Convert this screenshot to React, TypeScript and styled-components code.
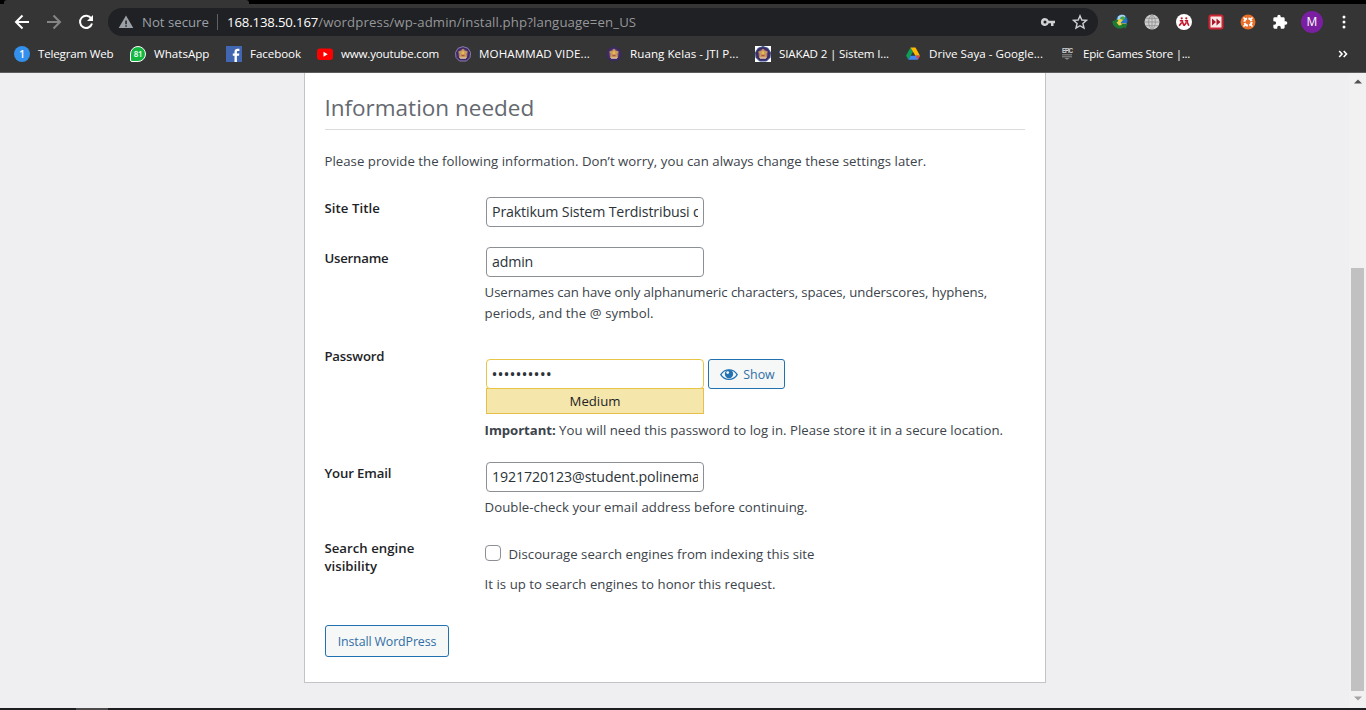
import React from "react";
import styled, { createGlobalStyle } from "styled-components";

const GlobalStyle = createGlobalStyle`
  *, *::before, *::after { box-sizing: border-box; }
  body {
    margin: 0;
    overflow: hidden;
    font-family: "Open Sans", "Noto Sans", sans-serif;
    background: #f0f0f1;
  }
`;

const Window = styled.div`
  display: flex;
  flex-direction: column;
  width: 1366px;
  height: 710px;
  overflow: hidden;
`;

/* ---------- browser chrome ---------- */

const TabStrip = styled.div`
  display: flex;
  height: 4px;
  flex: none;
  padding-left: 4px;
  background: #000;
`;

const ActiveTab = styled.div`
  width: 245px;
  background: #353535;
  border-radius: 3px 3px 0 0;
`;

const Toolbar = styled.div`
  display: flex;
  align-items: center;
  flex: none;
  height: 36px;
  padding: 0 9px 0 14px;
  background: #353535;
`;

const NavButtons = styled.div`
  display: flex;
  gap: 16px;
  width: 94px;
  flex: none;
`;

const AddressBar = styled.div`
  display: flex;
  align-items: center;
  flex: none;
  width: 990px;
  height: 28px;
  padding: 0 10px;
  border-radius: 14px;
  background: #202124;
  font-size: 13.2px;
  line-height: 28px;
  white-space: pre;
  color: #969799;
`;

const SecurityLabel = styled.span`
  width: 75px;
  margin-left: 8px;
  color: #9aa0a6;
`;

const Divider = styled.span`
  width: 1px;
  height: 16px;
  margin-right: 9px;
  background: #5f6164;
`;

const Host = styled.span`
  color: #fff;
  letter-spacing: -0.15px;
`;

const Path = styled.span`
  flex: 1;
  letter-spacing: 0.121px;
`;

const AddressActions = styled.span`
  display: flex;
  gap: 16px;
`;

const Extensions = styled.div`
  display: flex;
  align-items: center;
  gap: 16px;
  padding-left: 14px;
`;

const Avatar = styled.div`
  width: 22px;
  height: 22px;
  margin: 0 -3px;
  border-radius: 50%;
  background: #7b1fa2;
  color: #fff;
  font-size: 12px;
  line-height: 22px;
  text-align: center;
`;

const BookmarksBar = styled.div`
  display: flex;
  align-items: center;
  flex: none;
  height: 33px;
  padding: 0 18px 4px 14px;
  border-bottom: 1px solid #5c5c5c;
  background: #353535;
  color: #fff;
`;

const BookmarkLink = styled.div<{ $width: number }>`
  display: flex;
  align-items: center;
  gap: 8px;
  flex: none;
  width: ${(p) => p.$width}px;
`;

const BookmarkLabel = styled.span<{ $spacing: number }>`
  font-size: 11.6px;
  line-height: 16px;
  white-space: nowrap;
  letter-spacing: ${(p) => p.$spacing}px;
`;

const Overflow = styled.div`
  margin-left: auto;
  display: flex;
`;

/* ---------- page ---------- */

const Viewport = styled.div`
  display: flex;
  flex: none;
  height: 635px;
  background: #efeff1;
`;

const Page = styled.main`
  flex: 1;
  padding-left: 304px;
`;

const Card = styled.section`
  width: 742px;
  height: 610px;
  padding: 15px 20px 0;
  border: 1px solid #c3c4c7;
  border-top: 0;
  background: #fff;
  color: #3c434a;
  font-size: 13.2px;
`;

const Heading = styled.h1`
  height: 42px;
  margin: 0;
  border-bottom: 1px solid #dcdcde;
  color: #646970;
  font-size: 22.5px;
  font-weight: 400;
  line-height: 40px;
  text-indent: -0.6px;
`;

const Intro = styled.p`
  height: 57px;
  margin: 0;
  padding-top: 21px;
  line-height: 21px;
  letter-spacing: 0.041px;
  white-space: nowrap;
  text-indent: -0.6px;
`;

const Field = styled.div<{ $height: number }>`
  display: grid;
  grid-template-columns: 160px 1fr;
  height: ${(p) => p.$height}px;
  padding-top: 10px;
`;

const Label = styled.label<{ $spacing?: number }>`
  margin-left: -0.6px;
  padding-top: 2px;
  color: #1d2327;
  font-weight: 600;
  line-height: 18px;
  letter-spacing: ${(p) => p.$spacing ?? 0}px;
`;

const Control = styled.div<{ $offset?: number }>`
  padding-top: ${(p) => p.$offset ?? 0}px;
`;

const TextInput = styled.input<{ $spacing?: number }>`
  display: block;
  width: 218px;
  height: 30px;
  margin: 0 1px;
  padding: 0 5px 2px;
  border: 1px solid #8c8f94;
  border-radius: 4px;
  outline: 0;
  background: #fff;
  color: #2c3338;
  font-family: inherit;
  font-size: 14.2px;
  letter-spacing: ${(p) => p.$spacing ?? 0}px;
`;

const PasswordRow = styled.div`
  display: flex;
  gap: 3px;
`;

const PasswordInput = styled(TextInput)`
  padding: 0 4px 0 4.5px;
  border-color: #e9c546;
  font-size: 16px;
`;

const StrengthMeter = styled.div`
  width: 218px;
  height: 26px;
  margin: -1px 1px 0;
  border: 1px solid #e6c04a;
  background: #f5e6ab;
  color: #1d2327;
  line-height: 25px;
  text-align: center;
`;

const Hint = styled.p<{ $spacing?: number; $gap?: number }>`
  margin: ${(p) => p.$gap ?? 5}px 0 0 -0.4px;
  line-height: 21px;
  white-space: nowrap;
  letter-spacing: ${(p) => p.$spacing ?? 0}px;
`;

const Strong = styled.strong`
  font-weight: 700;
  letter-spacing: -0.066px;
`;

const Spaced = styled.span<{ $spacing: number }>`
  letter-spacing: ${(p) => p.$spacing}px;
`;

const Button = styled.button`
  display: flex;
  align-items: center;
  justify-content: center;
  padding: 0;
  border: 1px solid #2271b1;
  border-radius: 3px;
  background: #f6f7f7;
  color: #2f6ea5;
  font-family: inherit;
  font-size: 12.4px;
  white-space: nowrap;
`;

const ShowButton = styled(Button)`
  gap: 5px;
  width: 77px;
  height: 30px;
  padding-left: 2px;
`;

const SubmitButton = styled(Button)`
  width: 124px;
  height: 32px;
  margin-top: 23px;
  letter-spacing: -0.121px;
`;

const CheckLine = styled.label`
  display: flex;
  align-items: center;
  gap: 7.5px;
  height: 21px;
  letter-spacing: 0.033px;
`;

const Checkbox = styled.input`
  appearance: none;
  width: 16px;
  height: 16px;
  margin: -2px 0 0;
  border: 1px solid #8c8f94;
  border-radius: 4px;
  background: #fff;
`;

const Scrollbar = styled.div`
  display: flex;
  flex-direction: column;
  align-items: center;
  width: 17px;
  padding: 6px 0 7px;
  background: #f1f1f1;
`;

const ScrollTrack = styled.div`
  display: flex;
  flex: 1;
  align-items: flex-end;
  padding: 0 0 5px;
`;

const ScrollThumb = styled.div`
  width: 13px;
  height: 423px;
  background: #c1c1c1;
`;

const Taskbar = styled.div`
  flex: none;
  height: 2px;
  padding-left: 76px;
  background: #1d1e21;
`;

const TaskbarItem = styled.div`
  width: 32px;
  height: 2px;
  background: #4b4b4b;
`;

/* ---------- icons ---------- */

const BackIcon = () => (
  <svg width="16" height="16" viewBox="0 0 16 16" fill="none" stroke="#fff" strokeWidth="2">
    <path d="M15 8H2.5M8.5 1.5 2 8l6.5 6.5" />
  </svg>
);
const ForwardIcon = () => (
  <svg width="16" height="16" viewBox="0 0 16 16" fill="none" stroke="#858585" strokeWidth="2">
    <path d="M1 8h12.5M7.5 1.5 14 8l-6.5 6.5" />
  </svg>
);
const ReloadIcon = () => (
  <svg width="16" height="16" viewBox="0 0 16 16" fill="none" stroke="#fff" strokeWidth="2">
    <path d="M13.3 4.6A6.1 6.1 0 1 0 14 9.5" />
    <path d="M15 1v6H9z" fill="#fff" stroke="none" />
  </svg>
);
const WarningIcon = () => (
  <svg width="16" height="16" viewBox="0 0 16 16">
    <path d="M8 1.5 15.3 14H.7z" fill="#9aa0a6" />
    <path d="M7.3 6.5h1.5v3.7H7.3zM7.3 11.2h1.5v1.5H7.3z" fill="#202124" />
  </svg>
);
const KeyIcon = () => (
  <svg width="16" height="16" viewBox="0 0 16 16">
    <path
      fillRule="evenodd"
      fill="#d0d1d3"
      d="M5 4a4 4 0 1 0 3.7 5.300h2.300V12h2.500V9.300H15V6.700H8.700A4 4 0 0 0 5 4zm0 2.500a1.500 1.500 0 1 1 0 3 1.500 1.500 0 0 1 0-3z"
    />
  </svg>
);
const StarIcon = () => (
  <svg width="16" height="16" viewBox="0 0 16 16" fill="none" stroke="#d0d1d3" strokeWidth="1.4">
    <path d="m8 1.8 1.8 4.2 4.7.4-3.6 3.1 1.1 4.6L8 11.7l-4 2.400 1.100-4.600L1.500 6.400 6.200 6z" />
  </svg>
);
const DownloadGlobeIcon = () => (
  <svg width="16" height="16" viewBox="0 0 16 16">
    <circle cx="9.800" cy="6.500" r="5.700" fill="#2173cf" />
    <path d="M6 2.500C8 .3 11.500.2 13.500 2L12 4.500 9 4 5 7z" fill="#a9d5f2" />
    <path d="M8.500 3c2-1 4-.5 5 1l-2 2.500L9 6z" fill="#4aa53c" />
    <path d="M3 8c1.500-3 5.500-4 8-2L8.500 9l6 .5c-1 4-6 5-9 3z" fill="#ead04a" />
    <path d="M.3 7.500 5 5.300 6.500 7 4.500 8.500 7 11.500l3-.5-1-1.500 6.500.5-2 4.500-1.500-1.200C8 16 1 14.500.3 7.500z" fill="#1d7a34" />
  </svg>
);
const GlobeIcon = () => (
  <svg width="16" height="16" viewBox="0 0 16 16">
    <circle cx="8" cy="8" r="7.500" fill="#cfcfcf" />
    <path
      d="M8 .5v15M.5 8h15M2 4.300h12M2 11.700h12M8 .5C3.500 4 3.500 12 8 15.500M8 .5c4.500 3.500 4.500 11.500 0 15"
      fill="none"
      stroke="#858585"
      strokeWidth=".7"
    />
  </svg>
);
const PeopleIcon = () => (
  <svg width="16" height="16" viewBox="0 0 16 16">
    <circle cx="8" cy="8" r="8" fill="#fff" />
    <g fill="none" stroke="#c4172c" strokeWidth="1.6">
      <path d="M3.800 6.800h3.400M8.800 6.800h3.400M5.900 6.500 8 11.800M10.600 6.500l2.200 5.300M5.700 8.500 3.200 11.800M10.300 8.500 8 11.800" />
    </g>
    <circle cx="5.700" cy="4.300" r="1.100" fill="#c4172c" />
    <circle cx="10.300" cy="4.300" r="1.100" fill="#c4172c" />
  </svg>
);
const FastForwardIcon = () => (
  <svg width="16" height="16" viewBox="0 0 16 16">
    <rect x="1.500" y="1.500" width="13" height="13" rx="1.500" fill="#f7e9e6" stroke="#cf2434" strokeWidth="2" />
    <path d="M4 4.500 8 8l-4 3.500zM8.500 4.500l4 3.500-4 3.500z" fill="#a8172a" />
  </svg>
);
const OrangeIcon = () => (
  <svg width="16" height="16" viewBox="0 0 16 16">
    <circle cx="8" cy="8" r="7.500" fill="#e8702a" />
    <circle cx="8" cy="8" r="3.600" fill="none" stroke="#fff" strokeWidth="2" strokeDasharray="4.200 1.450" />
    <path d="m3.500 3.500 1.500 1.500m6 6 1.500 1.500M12.500 3.500 11 5m-6 6-1.500 1.500" stroke="#fff" strokeWidth="1.600" />
  </svg>
);
const PuzzleIcon = () => (
  <svg width="16" height="16" viewBox="0 0 24 24" fill="#fff">
    <path d="M20.500 11H19V7a2 2 0 0 0-2-2h-4V3.500a2.500 2.500 0 0 0-5 0V5H4a2 2 0 0 0-2 2v3.800h1.500a2.700 2.700 0 0 1 0 5.400H2V20a2 2 0 0 0 2 2h3.800v-1.500a2.700 2.700 0 0 1 5.400 0V22H17a2 2 0 0 0 2-2v-4h1.500a2.500 2.500 0 0 0 0-5z" />
  </svg>
);
const MenuIcon = () => (
  <svg width="16" height="16" viewBox="0 0 16 16" fill="#fff">
    <circle cx="8" cy="3" r="1.500" />
    <circle cx="8" cy="8" r="1.500" />
    <circle cx="8" cy="13" r="1.500" />
  </svg>
);

const TelegramBadge = styled.span`
  width: 16px;
  height: 16px;
  flex: none;
  border-radius: 50%;
  background: #3390ec;
  font-size: 10px;
  font-weight: 600;
  line-height: 16px;
  text-align: center;
`;

const WhatsAppBadge = styled.span`
  width: 16px;
  height: 16px;
  flex: none;
  border: 1.5px solid #fff;
  border-radius: 50% 50% 50% 2px;
  background: #12b83f;
  font-size: 8px;
  font-weight: 600;
  line-height: 14px;
  text-align: center;
  letter-spacing: -0.3px;
`;

const FacebookIcon = () => (
  <svg width="16" height="16" viewBox="0 0 16 16">
    <rect width="16" height="16" fill="#4267b2" />
    <path
      d="M8.500 16V9.800H6.800V7.400h1.700V5.700c0-2 1.200-3 3-3 .9 0 1.700.1 1.900.1v2.100h-1.300c-1 0-1.200.5-1.200 1.200v1.300h2.400L13 9.800h-2.100V16z"
      fill="#fff"
    />
  </svg>
);
const YoutubeIcon = () => (
  <svg width="16" height="16" viewBox="0 0 16 16">
    <rect y="2.500" width="16" height="11.500" rx="3" fill="#f00" />
    <path d="m6.500 5.700 4.200 2.500-4.200 2.500z" fill="#fff" />
  </svg>
);
const CrestIcon = ({ ring, back }: { ring: string; back?: string }) => (
  <svg width="16" height="16" viewBox="0 0 16 16">
    {back && <rect width="16" height="16" fill={back} />}
    <path d="m8 .6 5 1.700 2.500 4.200-.5 5L11.500 15h-7L1 11.500l-.5-5L3 2.300z" fill="#3d2a66" stroke={ring} />
    <circle cx="8" cy="8" r="5" fill="#6d4a78" />
    <path d="m8 2.500 1.800 2.300 3 .7-1.300 2.500.5 4H4l.5-4-1.300-2.500 3-.7z" fill="#c99a5c" />
    <path d="M8 4.500 9.500 7 8 9.500 6.500 7z" fill="#e3bd5a" />
    <path d="M6.500 8.800h3v1.400h-3z" fill="#a8504a" />
    <path d="M5 11.500h6v1.200H5z" fill="#e0cdb4" />
  </svg>
);
const DriveIcon = () => (
  <svg width="16" height="16" viewBox="0 0 16 16">
    <path d="M5.500 1.500 1 9.500l2.300 4.300L8 5.800z" fill="#0f9d58" />
    <path d="M5.500 1.500h5L15 9.700h-4.600z" fill="#ffba00" />
    <path d="M5.600 9.700H15l-2.300 4.100H3.300z" fill="#4285f4" />
    <path d="M11 9.700h4l-2.200 4z" fill="#ea4335" />
  </svg>
);
const EpicMark = styled.span`
  display: flex;
  flex-direction: column;
  align-items: center;
  width: 16px;
  height: 14px;
  flex: none;
  color: #d0d0d0;
  font-family: "Liberation Sans", sans-serif;
  font-size: 7px;
  font-weight: 700;
  line-height: 7px;
  letter-spacing: -1.1px;
  transform: scaleX(0.85);
`;
const EpicBase = () => (
  <svg width="12" height="6" viewBox="0 0 12 6">
    <path d="M0 .8h12M0 2.800h12" stroke="#9a9a9a" />
    <path d="M3 4h6L6 5.800z" fill="#8c8c8c" />
  </svg>
);
const ChevronsIcon = () => (
  <svg width="10" height="8" viewBox="0 0 10 8" fill="none" stroke="#fff" strokeWidth="1.6">
    <path d="M1.200 1 4 4 1.200 7M5.700 1l2.800 3-2.800 3" />
  </svg>
);
const EyeIcon = () => (
  <svg width="18" height="13" viewBox="0 0 18 13">
    <path
      d="M.8 6.700C4.500.3 13.500.3 17.200 6.700 13.500 13 4.500 13 .8 6.700z"
      fill="none"
      stroke="#2271b1"
      strokeWidth="1.3"
    />
    <circle cx="9" cy="6" r="4.200" fill="#2271b1" />
    <circle cx="7.700" cy="4.600" r="1.400" fill="#f6f7f7" />
  </svg>
);
const ScrollArrow = ({ up }: { up?: boolean }) => (
  <svg width="8" height="5" viewBox="0 0 8 5">
    <path d={up ? "M0 4.500h8L4 .5z" : "M0 .5h8l-4 4z"} fill={up ? "#505050" : "#a3a3a3"} />
  </svg>
);

/* ---------- data ---------- */

const bookmarks = [
  { label: "Telegram Web", width: 116, spacing: -0.197, icon: <TelegramBadge>1</TelegramBadge> },
  { label: "WhatsApp", width: 96, spacing: 0, icon: <WhatsAppBadge>81</WhatsAppBadge> },
  { label: "Facebook", width: 91, spacing: -0.078, icon: <FacebookIcon /> },
  { label: "www.youtube.com", width: 138, spacing: -0.203, icon: <YoutubeIcon /> },
  { label: "MOHAMMAD VIDE...", width: 151, spacing: 0.12, icon: <CrestIcon ring="#8f7fb0" /> },
  { label: "Ruang Kelas - JTI P...", width: 149, spacing: 0.057, icon: <CrestIcon ring="#353047" /> },
  { label: "SIAKAD 2 | Sistem I...", width: 150, spacing: -0.153, icon: <CrestIcon ring="#36558f" back="#fff" /> },
  { label: "Drive Saya - Google...", width: 154, spacing: 0.025, icon: <DriveIcon /> },
  {
    label: "Epic Games Store |...",
    width: 140,
    spacing: -0.281,
    icon: (
      <EpicMark>
        EPIC
        <EpicBase />
      </EpicMark>
    ),
  },
];

export default function App() {
  return (
    <Window>
      <GlobalStyle />
      <TabStrip>
        <ActiveTab />
      </TabStrip>
      <Toolbar>
        <NavButtons>
          <BackIcon />
          <ForwardIcon />
          <ReloadIcon />
        </NavButtons>
        <AddressBar>
          <WarningIcon />
          <SecurityLabel>Not secure</SecurityLabel>
          <Divider />
          <Host>168.138.50.167</Host>
          <Path>/wordpress/wp-admin/install.php?language=en_US</Path>
          <AddressActions>
            <KeyIcon />
            <StarIcon />
          </AddressActions>
        </AddressBar>
        <Extensions>
          <DownloadGlobeIcon />
          <GlobeIcon />
          <PeopleIcon />
          <FastForwardIcon />
          <OrangeIcon />
          <PuzzleIcon />
          <Avatar>M</Avatar>
          <MenuIcon />
        </Extensions>
      </Toolbar>
      <BookmarksBar>
        {bookmarks.map((b) => (
          <BookmarkLink key={b.label} $width={b.width}>
            {b.icon}
            <BookmarkLabel $spacing={b.spacing}>{b.label}</BookmarkLabel>
          </BookmarkLink>
        ))}
        <Overflow>
          <ChevronsIcon />
        </Overflow>
      </BookmarksBar>
      <Viewport>
        <Page>
          <Card>
            <Heading>Information needed</Heading>
            <Intro>
              Please provide the following information. Don’t worry, you can always change these settings later.
            </Intro>
            <Field $height={50}>
              <Label $spacing={0.072}>Site Title</Label>
              <Control>
                <TextInput readOnly $spacing={-0.15} defaultValue="Praktikum Sistem Terdistribusi dan" />
              </Control>
            </Field>
            <Field $height={98}>
              <Label $spacing={-0.214}>Username</Label>
              <Control>
                <TextInput readOnly $spacing={-0.19} defaultValue="admin" />
                <Hint>
                  <Spaced $spacing={-0.079}>
                    Usernames can have only alphanumeric characters, spaces, underscores, hyphens,
                  </Spaced>
                  <br />
                  <Spaced $spacing={0.077}>periods, and the @ symbol.</Spaced>
                </Hint>
              </Control>
            </Field>
            <Field $height={117}>
              <Label $spacing={-0.163}>Password</Label>
              <Control $offset={14}>
                <PasswordRow>
                  <PasswordInput readOnly $spacing={0} defaultValue="••••••••••" />
                  <ShowButton type="button">
                    <EyeIcon />
                    Show
                  </ShowButton>
                </PasswordRow>
                <StrengthMeter>Medium</StrengthMeter>
                <Hint $spacing={0.027} $gap={6}>
                  <Strong>Important:</Strong> You will need this password to log in. Please store it in a secure
                  location.
                </Hint>
              </Control>
            </Field>
            <Field $height={75}>
              <Label $spacing={-0.129}>Your Email</Label>
              <Control>
                <TextInput readOnly $spacing={-0.103} defaultValue="1921720123@student.polinema.ac.id" />
                <Hint $spacing={0.05}>Double-check your email address before continuing.</Hint>
              </Control>
            </Field>
            <Field $height={75}>
              <Label $spacing={0.03}>
                Search engine
                <br />
                visibility
              </Label>
              <Control $offset={6}>
                <CheckLine>
                  <Checkbox type="checkbox" />
                  Discourage search engines from indexing this site
                </CheckLine>
                <Hint $spacing={0.031} $gap={10}>
                  It is up to search engines to honor this request.
                </Hint>
              </Control>
            </Field>
            <SubmitButton type="button">Install WordPress</SubmitButton>
          </Card>
        </Page>
        <Scrollbar>
          <ScrollArrow up />
          <ScrollTrack>
            <ScrollThumb />
          </ScrollTrack>
          <ScrollArrow />
        </Scrollbar>
      </Viewport>
      <Taskbar>
        <TaskbarItem />
      </Taskbar>
    </Window>
  );
}
